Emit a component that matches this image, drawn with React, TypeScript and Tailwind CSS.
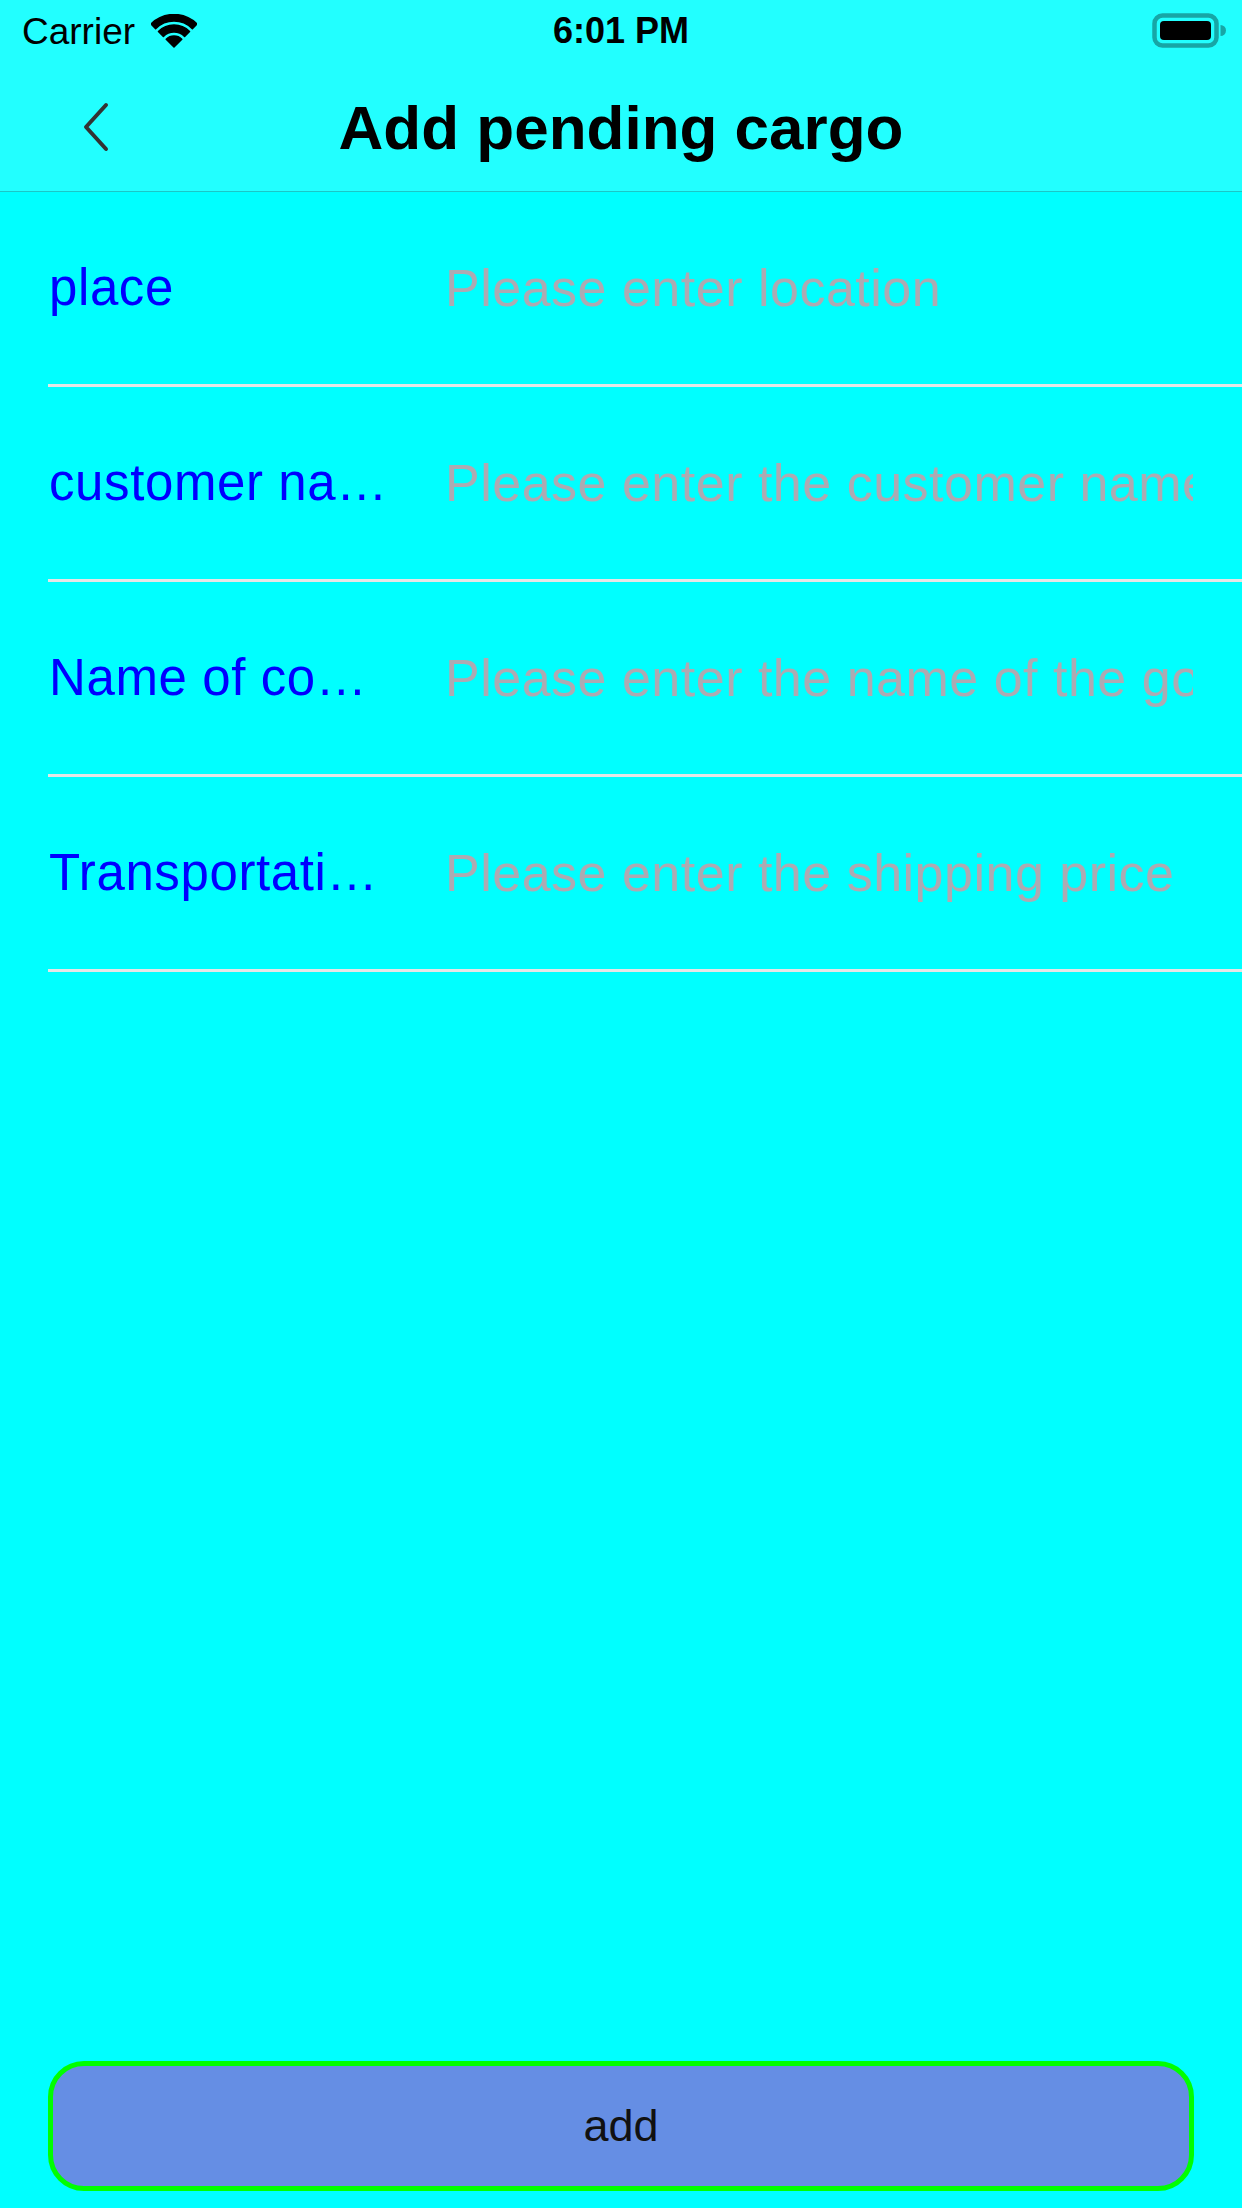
import React from "react";

const rows = [
  { label: "place", placeholder: "Please enter location" },
  { label: "customer na…", placeholder: "Please enter the customer name" },
  { label: "Name of co…", placeholder: "Please enter the name of the goods" },
  { label: "Transportati…", placeholder: "Please enter the shipping price" },
];

function Wifi() {
  const sector = (r1: number, r2: number) => {
    const s = Math.SQRT1_2;
    const cx = 23;
    const cy = 33;
    if (r1 === 0) {
      return `M ${cx} ${cy} L ${cx - r2 * s} ${cy - r2 * s} A ${r2} ${r2} 0 0 1 ${cx + r2 * s} ${cy - r2 * s} Z`;
    }
    return `M ${cx - r1 * s} ${cy - r1 * s} L ${cx - r2 * s} ${cy - r2 * s} A ${r2} ${r2} 0 0 1 ${cx + r2 * s} ${cy - r2 * s} L ${cx + r1 * s} ${cy - r1 * s} A ${r1} ${r1} 0 0 0 ${cx - r1 * s} ${cy - r1 * s} Z`;
  };
  return (
    <svg width="46" height="34" viewBox="0 0 46 34" className="block">
      <path d={sector(0, 11)} fill="#000" strokeLinejoin="round" stroke="#000" strokeWidth="1.5" />
      <path d={sector(15, 22)} fill="#000" strokeLinejoin="round" stroke="#000" strokeWidth="1.5" />
      <path d={sector(26, 32.5)} fill="#000" strokeLinejoin="round" stroke="#000" strokeWidth="1.5" />
    </svg>
  );
}

function Battery() {
  return (
    <svg width="76" height="36" viewBox="0 0 76 36" className="block">
      <rect x="2.5" y="2.5" width="62" height="30" rx="8" fill="none" stroke="#17a6a6" strokeWidth="4.5" />
      <rect x="8" y="8" width="51" height="19" rx="4" fill="#000" />
      <path d="M 68.5 12 A 5.5 5.5 0 0 1 68.5 23 Z" fill="#17a6a6" />
    </svg>
  );
}

export default function App() {
  return (
    <div
      className="w-[1242px] h-[2208px] bg-[#00ffff] flex flex-col overflow-hidden"
      style={{ fontFamily: '"Liberation Sans", Arial, sans-serif' }}
    >
      <header className="bg-[#22ffff] h-[192px] border-b border-[#1cc6c6] flex flex-col">
        <div className="h-[62px] grid grid-cols-3 items-center">
          <div className="flex items-center pl-[22px] gap-[16px]">
            <span className="text-[37px] leading-none text-black">Carrier</span>
            <Wifi />
          </div>
          <div className="text-center text-[36px] font-bold leading-none text-black">6:01 PM</div>
          <div className="flex justify-end pr-[14px]">
            <Battery />
          </div>
        </div>
        <div className="relative flex-1 flex items-center justify-center pt-[2px]">
          <button className="absolute left-[76px] top-1/2 -translate-y-1/2 p-[4px]">
            <svg width="32" height="52" viewBox="0 0 32 52" className="block">
              <path d="M 26 4 L 6 26 L 26 48" fill="none" stroke="#333333" strokeWidth="4" strokeLinecap="round" strokeLinejoin="round" />
            </svg>
          </button>
          <h1 className="text-[62px] font-bold leading-none text-black">Add pending cargo</h1>
        </div>
      </header>

      <main className="flex flex-col">
        {rows.map((r) => (
          <div
            key={r.label}
            className="ml-[48px] h-[195px] border-b-[3px] border-[#e6e6e6] flex items-center"
          >
            <div className="w-[397px] shrink-0 text-[51px] leading-normal tracking-[0.6px] text-[#0000ff] whitespace-nowrap pl-[1px]">
              {r.label}
            </div>
            <input
              className="w-[748px] bg-transparent outline-none text-[52px] tracking-[0.5px] leading-normal text-black placeholder:text-[#adaab2]"
              style={{ fontFamily: '"Liberation Sans", Arial, sans-serif' }}
              placeholder={r.placeholder}
            />
          </div>
        ))}
      </main>

      <div className="mt-auto mb-[17px] mx-[48px]">
        <button className="w-full h-[130px] rounded-[36px] border-[5px] border-[#00ff00] bg-[#658ee4] text-[45px] text-[#111111] flex items-center justify-center">
          add
        </button>
      </div>
    </div>
  );
}
